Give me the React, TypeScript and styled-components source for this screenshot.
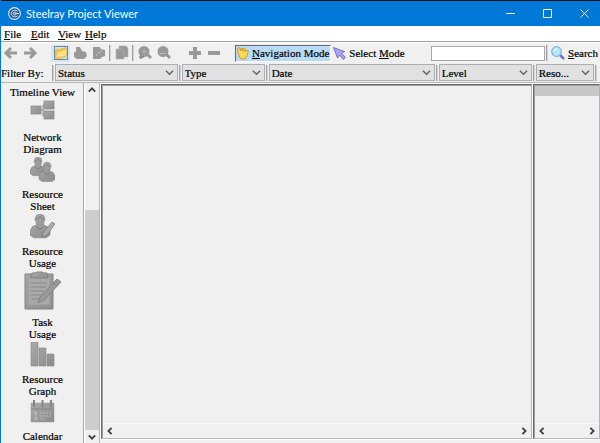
import React from "react";
import styled, { createGlobalStyle } from "styled-components";

const GlobalStyle = createGlobalStyle`
  *, *::before, *::after { box-sizing: border-box; }
  body { margin: 0; background: #f0f0f0; }
  button, input, select { font: inherit; color: inherit; margin: 0; }
  u { text-underline-offset: 1px; }
`;

const Window = styled.div`
  display: flex;
  flex-direction: column;
  height: 100vh;
  overflow: hidden;
  border-left: 1px solid #0078d7;
  background: #f0f0f0;
  color: #000;
  font: 11px/12px "Liberation Serif", "Times New Roman", serif;
  -webkit-text-stroke: 0.2px #000;
`;

const TitleBar = styled.header`
  display: flex;
  flex: none;
  align-items: center;
  gap: 5px;
  height: 26px;
  padding-left: 7px;
  border-top: 1px solid #111;
  background: #0078d7;
  color: #fff;
  -webkit-text-stroke: 0;
`;

const Title = styled.h1`
  flex: 1;
  margin: 0;
  font: 11px/20px Lato, "Open Sans", sans-serif;
`;

const WindowButton = styled.button`
  display: grid;
  place-items: center;
  width: 32px;
  height: 24px;
  padding: 0;
  border: 0;
  background: transparent;
`;

const MenuBar = styled.nav`
  display: flex;
  flex: none;
  align-items: center;
  gap: 3px;
  height: 16px;
  padding-left: 3px;
  border-bottom: 1px solid #a0a0a0;
  background: #fff;
`;

const MenuItem = styled.button`
  width: 24px;
  padding: 0;
  border: 0;
  background: transparent;
  text-align: left;
  white-space: nowrap;
`;

const Toolbar = styled.div`
  display: flex;
  flex: none;
  align-items: center;
  height: 21px;
  border-top: 1px solid #fff;
`;

const ToolGroup = styled.div`
  display: flex;
  margin-right: 12px;
`;

const ToolButton = styled.button<{ $active?: boolean }>`
  display: grid;
  place-items: center;
  width: 19px;
  height: 17px;
  padding: 0;
  border: 0;
  background: ${(p) => (p.$active ? "#cce8ff" : "transparent")};
`;

const Separator = styled.span`
  flex: none;
  width: 2px;
  height: 16px;
  border-left: 1px solid #a0a0a0;
  border-right: 1px solid #d4d4d4;
  margin: 0 1px;
`;

const ModeButton = styled.button<{ $active?: boolean }>`
  display: flex;
  align-items: center;
  gap: 3px;
  height: 17px;
  padding: 0 1px;
  border: 1px solid;
  border-color: ${(p) => (p.$active ? "#696969 #fff #fff #696969" : "transparent")};
  background: ${(p) => (p.$active ? "#b9dcf6" : "transparent")};
  white-space: nowrap;
`;

const SearchGroup = styled.form`
  display: flex;
  align-items: center;
  margin-left: auto;
`;

const SearchInput = styled.input`
  width: 19vw;
  height: 15px;
  padding: 0 3px;
  border: 1px solid #a5a5ad;
  outline: 0;
  background: #fff;
`;

const SearchButton = styled.button`
  display: flex;
  align-items: center;
  gap: 3px;
  padding: 0 2px;
  border: 0;
  background: transparent;
`;

const FilterBar = styled.div`
  display: flex;
  flex: none;
  align-items: center;
  height: 20px;
  padding-right: 2px;
  border-bottom: 1px solid #b4b4b4;
`;

const FilterTitle = styled.span`
  flex: none;
  width: 50px;
  white-space: nowrap;
`;

const SelectBox = styled.label<{ $grow: number }>`
  display: grid;
  flex: ${(p) => p.$grow} 1 0;
  min-width: 0;
  align-items: center;
  > * { grid-area: 1 / 1; }
  > svg { justify-self: end; margin-right: 4px; pointer-events: none; }
`;

const Select = styled.select`
  width: 100%;
  height: 17px;
  padding: 0 14px 0 2px;
  appearance: none;
  border: 1px solid #adadb2;
  border-radius: 0;
  background: #e1e1e1;
`;

const Workspace = styled.main`
  display: grid;
  flex: 1;
  grid-template-columns: 99px minmax(0, 431fr) minmax(0, 67fr);
  gap: 1px;
  min-height: 0;
`;

const Sidebar = styled.aside`
  display: grid;
  grid-template-columns: 1fr 15px;
  min-height: 0;
  border-right: 1px solid #b6b6bc;
`;

const ViewList = styled.nav`
  display: flex;
  flex-direction: column;
  align-items: center;
  gap: 2px;
  padding-top: 3px;
  overflow: hidden;
  border-right: 1px solid #a8a8b0;
  border-left: 1px solid #fafafa;
`;

const ViewButton = styled.button`
  display: flex;
  flex: none;
  flex-direction: column;
  align-items: center;
  gap: 6px;
  width: 70px;
  padding: 0;
  border: 0;
  background: transparent;
  text-align: center;
`;

const ViewIcon = styled.svg`
  display: block;
`;

const VScroll = styled.div`
  display: grid;
  grid-template-rows: 15px 112px 1fr 13px;
  min-height: 0;
  border-left: 1px solid #fff;
  background: #f0f0f0;
`;

const Thumb = styled.div`
  grid-row: 3;
  background: #cdcdcd;
`;

const ScrollButton = styled.button<{ $row?: number }>`
  display: grid;
  grid-row: ${(p) => p.$row ?? "auto"};
  place-items: center;
  width: 14px;
  height: 13px;
  padding: 0;
  border: 0;
  background: transparent;
`;

const Pane = styled.section`
  display: flex;
  flex-direction: column;
  min-width: 0;
  margin: 1px 0 4px;
  border: 1px solid;
  border-color: #696969 #b4b4bd #b4b4bd #696969;
  outline: 1px solid #fff;
  box-shadow: inset 1px 1px #a0a0a0;
`;

const PaneHeader = styled.div`
  flex: none;
  height: 10px;
  margin: 1px 0 0 1px;
  background: #c8c8c8;
`;

const PaneBody = styled.div`
  flex: 1;
`;

const HScroll = styled.div`
  display: flex;
  justify-content: space-between;
  height: 15px;
  margin-left: 1px;
  border-top: 1px solid #f8f8f8;
`;

const chevrons = {
  down: "M1 3l4 4 4-4",
  up: "M1 7l4-4 4 4",
  left: "M7 1L3 5l4 4",
  right: "M3 1l4 4-4 4",
};

function Chevron({ dir, heavy }: { dir: keyof typeof chevrons; heavy?: boolean }) {
  return (
    <svg width={heavy ? 8 : 9} height={heavy ? 8 : 9} viewBox="0 0 10 10" fill="none" stroke={heavy ? "#404040" : "#606060"} strokeWidth={heavy ? 2.3 : 1.4} aria-hidden>
      <path d={chevrons[dir]} />
    </svg>
  );
}

const toolDrawings: Record<string, React.ReactNode> = {
  back: <path d="M7 2L2 7l5 5M2.5 7H13" fill="none" stroke="#999" strokeWidth="3" />,
  forward: <path d="M7 2l5 5-5 5M11.5 7H1" fill="none" stroke="#999" strokeWidth="3" />,
  open: (
    <>
      <path d="M1.5 12V4l2-1 2 .5L11 1.5l2 1.5-1 8-9 2z" fill="#f2c347" stroke="#e0ac3c" strokeWidth=".6" />
      <path d="M2 12L4 6l9-3-1 7z" fill="#ffe28b" stroke="#e8bc4c" strokeWidth=".5" />
    </>
  ),
  print: <path d="M3 1h4l2 4 4 1 1 4-3 3H4l-3-2V7l2-2z" fill="#999" />,
  export: (
    <>
      <path d="M1 1h7l1 2 4 1v6l-3 1-2 2H1z" fill="#999" />
      <path d="M4 10l2-3 3-1V4" fill="none" stroke="#bbb" />
    </>
  ),
  copy: (
    <g fill="#999" stroke="#b5b5b5" strokeWidth=".6">
      <path d="M4 0h7l2 2v9H4z" />
      <path d="M1 3h6l2 2v8H1z" />
    </g>
  ),
  zoomIn: (
    <>
      <path d="M9 8l4 4" stroke="#999" strokeWidth="3" />
      <circle cx="6" cy="5.5" r="5.500" fill="#999" />
      <path d="M3 8v5M1 11h5" stroke="#888" strokeWidth="1.5" />
      <path d="M6 3v5M4 5.500h4" stroke="#b5b5b5" />
    </>
  ),
  zoomOut: (
    <>
      <path d="M9 8l4 4" stroke="#999" strokeWidth="3" />
      <circle cx="6" cy="5.5" r="5.500" fill="#999" />
      <path d="M3 7.5h6" stroke="#bbb" />
    </>
  ),
  add: <path d="M7 1v12M1 7h12" stroke="#999" strokeWidth="4" />,
  remove: <path d="M1 7h12" stroke="#999" strokeWidth="4" />,
};

function Tool({ name, label, active }: { name: string; label: string; active?: boolean }) {
  return (
    <ToolButton $active={active} aria-label={label}>
      <svg width="14" height="14" viewBox="0 0 14 14" aria-hidden overflow="visible">
        {toolDrawings[name]}
        {active && <rect x=".5" y=".5" width="13" height="13" fill="none" stroke="#222" strokeDasharray="1 1" />}
      </svg>
    </ToolButton>
  );
}

const Person = () => (
  <>
    <path d="M0 15v-3l2-3 3-1V6L4 4l1-3 3-1 3 1 1 3-1 2v2l3 1 2 3v3l-3 2H3z" fill="url(#iconGray)" stroke="#858585" strokeWidth=".5" />
    <path d="M5 4l3-2 3 2M5 9l3 2 3-2" fill="none" stroke="#777" strokeWidth=".7" />
  </>
);

const views: { label: string; width: number; height: number; drawing?: React.ReactNode }[] = [
  {
    label: "Network Diagram", width: 25, height: 25,
    drawing: (
      <g fill="url(#iconGray)" stroke="#888" strokeWidth=".7">
        <path d="M11 10h2M14 5h-1v11h1" fill="none" strokeWidth="1" />
        <rect x="1" y="6" width="10" height="8" />
        <rect x="14" y="1" width="10" height="8" />
        <rect x="14" y="11" width="10" height="8" />
      </g>
    ),
  },
  {
    label: "Resource Sheet", width: 25, height: 25,
    drawing: (
      <>
        <g transform="scale(1 1.100)"><Person /></g>
        <g transform="translate(9 5) scale(1 1.150)"><Person /></g>
      </>
    ),
  },
  {
    label: "Resource Usage", width: 25, height: 25,
    drawing: (
      <>
        <g transform="scale(1.250 1.400)"><Person /></g>
        <path d="M12 23l1-4 9-11 3 2-8 11z" fill="#aaa" stroke="#777" strokeWidth=".7" />
      </>
    ),
  },
  {
    label: "Task Usage", width: 38, height: 39,
    drawing: (
      <g fill="url(#iconGray)" stroke="#828282">
        <path d="M1 3h28v35H1z" />
        <path d="M4 6h22v28H4z" fill="#a9a9a9" stroke="#999" />
        <path d="M7 7l1-5h3l2-1h5l2 1h3l1 5z" />
        <path d="M7 12h16M7 16h15M7 20h13M7 24h10M7 28h8" stroke="#888" />
        <path d="M14 32l2-6L33 8l4 3-17 18z" fill="#999" />
        <path d="M29 12l4 3" />
      </g>
    ),
  },
  {
    label: "Resource Graph", width: 25, height: 25,
    drawing: (
      <g fill="url(#iconGray)" stroke="#888" strokeWidth=".6">
        <path d="M1 0h7v24H1zM9 6h7v18H9zM17 12h7v12h-7z" />
      </g>
    ),
  },
  {
    label: "Calendar", width: 25, height: 25,
    drawing: (
      <>
        <path d="M1 4h23v19H1z" fill="url(#iconGray)" stroke="#999" strokeWidth=".5" />
        <path d="M1 10h23" stroke="#858585" />
        <path d="M4 1v7M12.5 1v7M21 1v7" stroke="#858585" strokeWidth="2" />
        <path d="M4 14l2-1v7M4 20h4" fill="none" stroke="#c4c4c4" />
        <path d="M10 14h11M10 17h11M10 20h6" stroke="#b8b8b8" strokeDasharray="2 1" />
      </>
    ),
  },
];

const filters = [
  { label: "Status", grow: 124 },
  { label: "Type", grow: 84 },
  { label: "Date", grow: 168 },
  { label: "Level", grow: 94 },
  { label: "Reso...", grow: 59 },
];

const Accel = ({ text, at = 0 }: { text: string; at?: number }) => (
  <span>
    {text.slice(0, at)}
    <u>{text[at]}</u>
    {text.slice(at + 1)}
  </span>
);

export default function App() {
  return (
    <Window>
      <GlobalStyle />
      <TitleBar>
        <svg width="13" height="13" viewBox="0 0 14 14" fill="none" stroke="#dcecff" aria-hidden>
          <circle cx="7" cy="7" r="6.3" fill="#2c5989" strokeWidth="1.2" />
          <path d="M10.500 4.500C8 2.500 3.500 3.500 3.500 7s4.500 4.500 7 2.500" />
          <path d="M9 6c-1-1-3.500-.5-3.500 1S8 9 9 8M7 7h5" />
        </svg>
        <Title>Steelray Project Viewer</Title>
        <WindowButton aria-label="Minimize"><svg width="9" height="9" stroke="#fff"><path d="M0 4.5h9" /></svg></WindowButton>
        <WindowButton aria-label="Maximize"><svg width="9" height="9" stroke="#fff" fill="none"><path d="M.5.5h8v8h-8z" /></svg></WindowButton>
        <WindowButton aria-label="Close"><svg width="9" height="9" stroke="#fff"><path d="M.5.5l8 8M8.5.5l-8 8" /></svg></WindowButton>
      </TitleBar>

      <MenuBar>
        {["File", "Edit", "View", "Help"].map((m) => <MenuItem key={m}><Accel text={m} /></MenuItem>)}
      </MenuBar>

      <Toolbar>
        <ToolGroup>
          <Tool name="back" label="Back" />
          <Tool name="forward" label="Forward" />
        </ToolGroup>
        <Tool name="open" label="Open" active />
        <Tool name="print" label="Print" />
        <Tool name="export" label="Export" />
        <Separator />
        <Tool name="copy" label="Copy" />
        <Separator />
        <ToolGroup>
          <Tool name="zoomIn" label="Zoom in" />
          <Tool name="zoomOut" label="Zoom out" />
        </ToolGroup>
        <ToolGroup>
          <Tool name="add" label="Expand" />
          <Tool name="remove" label="Collapse" />
        </ToolGroup>
        <ModeButton $active aria-pressed="true">
          <svg width="12" height="14" viewBox="0 0 12 14" aria-hidden>
            <path d="M3 12L1 7 .7 2l1.500-.5L4 5l.3-3 1.500.2L6 5l1-2.500 1.500.5L8 6l2-2 1.300 1L10 10l-2 3H4z" fill="#ffd75e" stroke="#d68f18" strokeWidth=".9" />
          </svg>
          <Accel text="Navigation Mode" />
        </ModeButton>
        <ModeButton aria-pressed="false">
          <svg width="13" height="13" viewBox="0 0 13 13" aria-hidden>
            <path d="M.5.5l11 4-3 1.500 4 4.500-2 2-4-4.500-2 3z" fill="#aaa5f0" stroke="#625bc0" strokeWidth=".8" />
          </svg>
          <Accel text="Select Mode" at={7} />
        </ModeButton>
        <SearchGroup onSubmit={(e) => e.preventDefault()}>
          <SearchInput type="text" aria-label="Search text" />
          <Separator />
          <SearchButton type="submit">
            <svg width="14" height="14" viewBox="0 0 14 14" aria-hidden>
              <path d="M9 9l4 4" stroke="#7872c8" strokeWidth="2.5" />
              <circle cx="5.5" cy="5.5" r="4.8" fill="#b8e7fa" stroke="#76b5df" strokeWidth="1.2" />
              <path d="M3 5a3 3 0 0 1 3-2" stroke="#fff" fill="none" />
            </svg>
            <Accel text="Search" />
          </SearchButton>
        </SearchGroup>
      </Toolbar>

      <FilterBar>
        <FilterTitle>Filter By:</FilterTitle>
        <Separator />
        {filters.map((f) => (
          <React.Fragment key={f.label}>
            <SelectBox $grow={f.grow}>
              <Select aria-label={f.label}><option>{f.label}</option></Select>
              <Chevron dir="down" />
            </SelectBox>
            <Separator />
          </React.Fragment>
        ))}
      </FilterBar>

      <Workspace>
        <Sidebar>
          <ViewList>
            <ViewButton>Timeline View</ViewButton>
            {views.map((v) => (
              <ViewButton key={v.label}>
                <ViewIcon width={v.width} height={v.height} aria-hidden>
                  <defs>
                    <linearGradient id="iconGray" x2="1" y2="1">
                      <stop stopColor="#aaa" />
                      <stop offset="1" stopColor="#8c8c8c" />
                    </linearGradient>
                  </defs>
                  {v.drawing}
                </ViewIcon>
                <span>{v.label.split(" ").map((w) => <React.Fragment key={w}>{w}<br /></React.Fragment>)}</span>
              </ViewButton>
            ))}
          </ViewList>
          <VScroll>
            <ScrollButton $row={1} aria-label="Scroll up"><Chevron dir="up" heavy /></ScrollButton>
            <Thumb />
            <ScrollButton $row={4} aria-label="Scroll down"><Chevron dir="down" heavy /></ScrollButton>
          </VScroll>
        </Sidebar>
        {[false, true].map((header) => (
          <Pane key={String(header)}>
            {header && <PaneHeader />}
            <PaneBody />
            <HScroll>
              <ScrollButton aria-label="Scroll left"><Chevron dir="left" heavy /></ScrollButton>
              <ScrollButton aria-label="Scroll right"><Chevron dir="right" heavy /></ScrollButton>
            </HScroll>
          </Pane>
        ))}
      </Workspace>
    </Window>
  );
}
